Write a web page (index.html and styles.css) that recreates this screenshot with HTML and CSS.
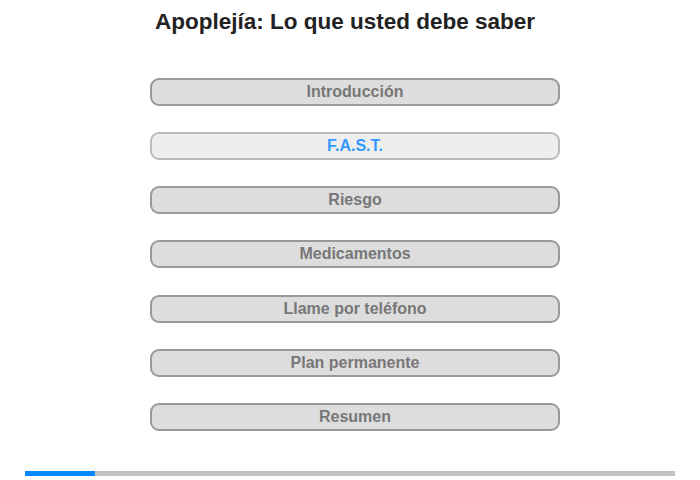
FILE: index.html
```html
<!DOCTYPE html>
<html lang="es">
<head>
<meta charset="utf-8">
<link rel="stylesheet" href="styles.css">
</head>
<body>
<div class="page">
  <h1 class="title">Apoplejía: Lo que usted debe saber</h1>
  <nav class="menu">
    <div class="btn">Introducción</div>
    <div class="btn active">F.A.S.T.</div>
    <div class="btn">Riesgo</div>
    <div class="btn">Medicamentos</div>
    <div class="btn">Llame por teléfono</div>
    <div class="btn">Plan permanente</div>
    <div class="btn">Resumen</div>
  </nav>
  <div class="progress"><div class="progress-fill"></div></div>
</div>
</body>
</html>
```
FILE: styles.css
```css
html, body {
  margin: 0;
  padding: 0;
  background: #fff;
}
.page {
  width: 700px;
  height: 480px;
  display: flex;
  flex-direction: column;
  font-family: "Liberation Sans", Arial, sans-serif;
}
.title {
  margin: 0;
  padding-top: 8px;
  height: 78px;
  box-sizing: border-box;
  font-size: 22.5px;
  line-height: 28px;
  font-weight: bold;
  color: #222;
  text-align: center;
  padding-right: 10px;
}
.menu {
  display: flex;
  flex-direction: column;
  gap: 26.17px;
  padding-left: 150px;
}
.btn {
  width: 410px;
  height: 28px;
  box-sizing: border-box;
  border: 2px solid #999;
  border-radius: 9px;
  background: #ddd;
  color: #777;
  font-size: 16px;
  font-weight: bold;
  line-height: 24px;
  text-align: center;
}
.btn.active {
  border-color: #bbb;
  background: #eee;
  color: #3399ff;
}
.progress {
  margin: 40px 25px 0;
  height: 5px;
  background: #c3c3c3;
}
.progress-fill {
  width: 70px;
  height: 5px;
  background: #0088ff;
}
```
